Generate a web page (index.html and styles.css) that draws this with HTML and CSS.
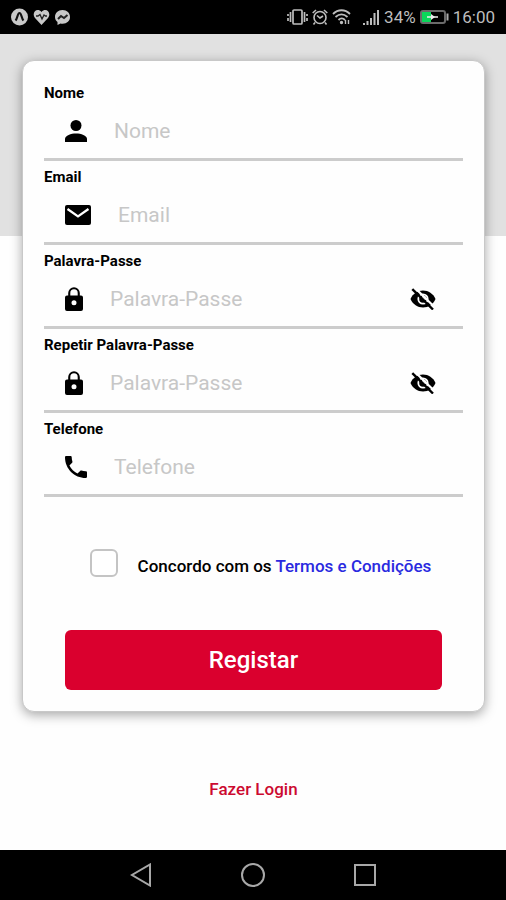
FILE: index.html
```html
<!DOCTYPE html>
<html lang="pt">
<head>
<meta charset="utf-8">
<meta name="viewport" content="width=device-width, initial-scale=1">
<title>Registar</title>
<link rel="stylesheet" href="styles.css">
</head>
<body>
<svg class="sprite" aria-hidden="true">
  <symbol id="lock" viewBox="0 0 18 24"><path fill-rule="evenodd" d="M2 8.500h1.200V6a5.800 5.800 0 0 1 11.600 0v2.500H16a2 2 0 0 1 2 2V22a2 2 0 0 1-2 2H2a2 2 0 0 1-2-2V10.500a2 2 0 0 1 2-2zm3.300 0h7.400V6a3.700 3.700 0 0 0-7.400 0zM9 13.200a2.500 2.500 0 1 0 0 5 2.500 2.500 0 0 0 0-5z"/></symbol>
  <symbol id="eye-off" viewBox="0 0 26 22"><path d="M.5 11C3 5.500 7.500 2.500 13 2.500S23 5.500 25.500 11C23 16.500 18.500 19.500 13 19.500S3 16.500.5 11z"/><circle cx="13" cy="11" r="4.700" fill="none" stroke="#fff" stroke-width="1.800"/><circle cx="14" cy="10" r="2.500" fill="#bbb"/><path d="M4.500-.500l20 19.500" stroke="#fff" stroke-width="2.200"/><path d="M2.300 1.200L23 21.500" stroke="#000" stroke-width="2.400"/></symbol>
</svg>

<header class="status">
  <div class="status-group">
    <svg width="17" height="18" viewBox="0 0 17 18"><circle cx="8.500" cy="9" r="8.500" fill="#c8c8c8"/><path d="M4.500 12.500c2-2 2-7.500 4-7.500s2 5.500 4 7.500" fill="none" stroke="#111" stroke-width="2.200"/></svg>
    <svg width="17" height="18" viewBox="0 0 17 18"><path d="M8.500 17L2 10C-2 5 4-1 8.500 4 13-1 19 5 15 10z" fill="#c8c8c8"/><path d="M3 8h2l2-1.500 2 4.500 2-4 1.500 1H14" fill="none" stroke="#222" stroke-width="1.300"/></svg>
    <svg width="15" height="18" viewBox="0 0 15 18"><path d="M7.500 2C3 2 0 5 0 9c0 2 1 4 2.500 5v3l3-1.500c5.500 1 9.500-2 9.500-6.500 0-4-3-7-7.500-7z" fill="#c8c8c8"/><path d="M3 11l3-3 3 2 3.500-3" fill="none" stroke="#222" stroke-width="2"/></svg>
  </div>
  <div class="status-group status-right">
    <svg width="21" height="18" viewBox="0 0 21 18" fill="none" stroke="#bdbdbd" stroke-width="1.700"><rect x="6" y="2" width="9" height="14" rx="1"/><path d="M3.500 4v10M17.500 4v10M1 6v2M1 10v3M20 6v2M20 10v3"/></svg>
    <svg width="16" height="18" viewBox="0 0 16 18" fill="none" stroke="#bdbdbd" stroke-width="1.600"><circle cx="8" cy="9.500" r="6"/><path d="M5 7.500L8 10l3-2M.7 5L4 2M15.300 5L12 2M3 14.500L1.500 16.500M13 14.500l1.500 2"/></svg>
    <svg class="wifi" width="19" height="18" viewBox="0 0 19 18" fill="none" stroke="#bdbdbd" stroke-width="1.800"><path d="M1 6c5-5 12-5 17 0M3.500 9c4-3.500 8-3.500 12 0M6.500 12c2-2 4.500-2 6.500 0"/><circle cx="9.500" cy="14.500" r=".8"/><path d="M13.500 12v4M16.500 12v4" stroke-width="1.400"/></svg>
    <svg width="17" height="18" viewBox="0 0 17 18" stroke="#bdbdbd" stroke-width="2"><path d="M1 17v-2M4.500 17v-4M8 17v-7M11.500 17V5M15 17V2"/></svg>
    <span>34%</span>
    <svg width="29" height="18" viewBox="0 0 29 18"><rect x="1" y="3" width="24" height="12" rx="2" fill="none" stroke="#6a6a6a" stroke-width="2"/><path d="M2 4h9v10H2z" fill="#0bd65a"/><path d="M27.500 5.500v7" stroke="#aaa" stroke-width="2"/><path d="M7 9h5M13 9h5" stroke="#eee" stroke-width="1.500"/><path d="M11 6l4 3-4 3z" fill="#eee"/></svg>
    <span>16:00</span>
  </div>
</header>

<main class="page">
  <form class="card">
    <div class="field">
      <label for="nome">Nome</label>
      <div class="row">
        <svg width="22" height="22" viewBox="0 0 22 22"><circle cx="11" cy="5.500" r="5.500"/><path d="M0 22v-3c0-3.500 6-5.500 11-5.500s11 2 11 5.500v3z"/></svg>
        <input id="nome" type="text" placeholder="Nome">
      </div>
    </div>
    <div class="field">
      <label for="email">Email</label>
      <div class="row">
        <svg width="26" height="20" viewBox="0 0 26 20"><rect width="26" height="20" rx="2"/><path d="M2.500 4L13 11.500 23.500 4" fill="none" stroke="#fff" stroke-width="2.200"/></svg>
        <input id="email" type="email" placeholder="Email">
      </div>
    </div>
    <div class="field">
      <label for="passe">Palavra-Passe</label>
      <div class="row">
        <svg width="18" height="24"><use href="#lock"/></svg>
        <input id="passe" type="password" placeholder="Palavra-Passe">
        <button class="eye" type="button" aria-label="Mostrar palavra-passe"><svg width="26" height="22"><use href="#eye-off"/></svg></button>
      </div>
    </div>
    <div class="field">
      <label for="repetir">Repetir Palavra-Passe</label>
      <div class="row">
        <svg width="18" height="24"><use href="#lock"/></svg>
        <input id="repetir" type="password" placeholder="Palavra-Passe">
        <button class="eye" type="button" aria-label="Mostrar palavra-passe"><svg width="26" height="22"><use href="#eye-off"/></svg></button>
      </div>
    </div>
    <div class="field">
      <label for="telefone">Telefone</label>
      <div class="row">
        <svg width="22" height="22" viewBox="3 3 18 18"><path d="M6.620 10.790c1.440 2.830 3.760 5.140 6.590 6.590l2.200-2.200c.27-.27.67-.36 1.020-.24 1.120.37 2.330.57 3.570.57.55 0 1 .45 1 1V20c0 .55-.45 1-1 1-9.390 0-17-7.610-17-17 0-.55.45-1 1-1h3.500c.55 0 1 .45 1 1 0 1.250.2 2.450.57 3.570.11.35.03.74-.25 1.020l-2.200 2.200z"/></svg>
        <input id="telefone" type="tel" placeholder="Telefone">
      </div>
    </div>
    <div class="terms">
      <input id="aceito" type="checkbox">
      <span><label for="aceito">Concordo com os</label> <a href="#termos">Termos e Condições</a></span>
    </div>
    <button class="submit" type="submit">Registar</button>
  </form>
  <a class="login" href="#login">Fazer Login</a>
</main>

<nav class="navbar">
  <button type="button" aria-label="Voltar"><svg width="24" height="24" viewBox="0 0 24 24"><path d="M21 1.500v21L3 12z"/></svg></button>
  <button type="button" aria-label="Início"><svg width="24" height="24" viewBox="0 0 24 24"><circle cx="12" cy="12" r="11"/></svg></button>
  <button type="button" aria-label="Recentes"><svg width="24" height="24" viewBox="0 0 24 24"><rect x="2" y="2" width="20" height="20"/></svg></button>
</nav>
</body>
</html>
```
FILE: styles.css
```css
* {
  box-sizing: border-box;
}

body {
  margin: 0;
  min-height: 100vh;
  display: flex;
  flex-direction: column;
  background: #fefefe;
  color: #000;
  font-family: Roboto, "Liberation Sans", sans-serif;
}

svg {
  display: block;
  flex: none;
}

.sprite {
  position: absolute;
  width: 0;
  height: 0;
}

a {
  text-decoration: none;
}

button {
  border: 0;
  padding: 0;
  background: none;
  font-family: inherit;
}

.status {
  display: flex;
  justify-content: space-between;
  align-items: center;
  height: 34px;
  padding: 0 11px;
  background: #000;
  color: #bdbdbd;
  font-size: 17px;
}

.status-group {
  display: flex;
  align-items: center;
  gap: 5px;
}

.status-right {
  gap: 4px;
}

.wifi {
  margin-right: 8px;
}

.page {
  flex: 1;
  display: flex;
  flex-direction: column;
  align-items: center;
  padding: 26px 21px 0 22px;
  background: linear-gradient(#e1e1e1 202px, transparent 202px);
}

.card {
  width: 100%;
  padding: 16px 21px 21px;
  border: 1px solid #c8c8c8;
  border-radius: 12px;
  background: #fefefe;
  box-shadow: 0 3px 12px rgba(0, 0, 0, 0.35);
}

.field {
  padding-top: 7px;
  border-bottom: 3px solid #ccc;
}

.field label {
  display: block;
  margin-bottom: 4px;
  font-size: 15px;
  line-height: 18px;
  font-weight: 700;
}

.row {
  display: flex;
  align-items: center;
  height: 52px;
  padding: 0 27px 2px 21px;
}

.row input {
  flex: 1;
  min-width: 0;
  margin-left: 27px;
  padding: 0;
  border: 0;
  outline: 0;
  background: none;
  font-family: inherit;
  font-size: 21px;
}

.row input::placeholder {
  color: #c7c7c7;
  opacity: 1;
}

.terms {
  display: flex;
  align-items: center;
  justify-content: center;
  gap: 20px;
  margin-top: 49px;
  padding-left: 14px;
  font-size: 17px;
  line-height: 28px;
  font-weight: 500;
}

.terms span {
  padding-top: 6px;
}

.terms input {
  appearance: none;
  width: 28px;
  height: 28px;
  margin: 0;
  border: 2px solid #c4c4c4;
  border-radius: 6px;
  background: #fff;
}

.terms a {
  color: #2a2ae0;
}

.submit {
  display: block;
  width: calc(100% - 42px);
  height: 60px;
  margin: 50px auto 0;
  border-radius: 6px;
  background: #da002e;
  color: #fff;
  font-size: 24px;
  font-weight: 500;
}

.login {
  margin-top: 67px;
  color: #cc0a30;
  font-size: 17px;
  line-height: 20px;
  font-weight: 500;
}

.navbar {
  display: flex;
  justify-content: center;
  align-items: center;
  gap: 88px;
  height: 50px;
  background: #000;
}

.navbar svg {
  fill: none;
  stroke: #a8a8a8;
  stroke-width: 2;
}
```
